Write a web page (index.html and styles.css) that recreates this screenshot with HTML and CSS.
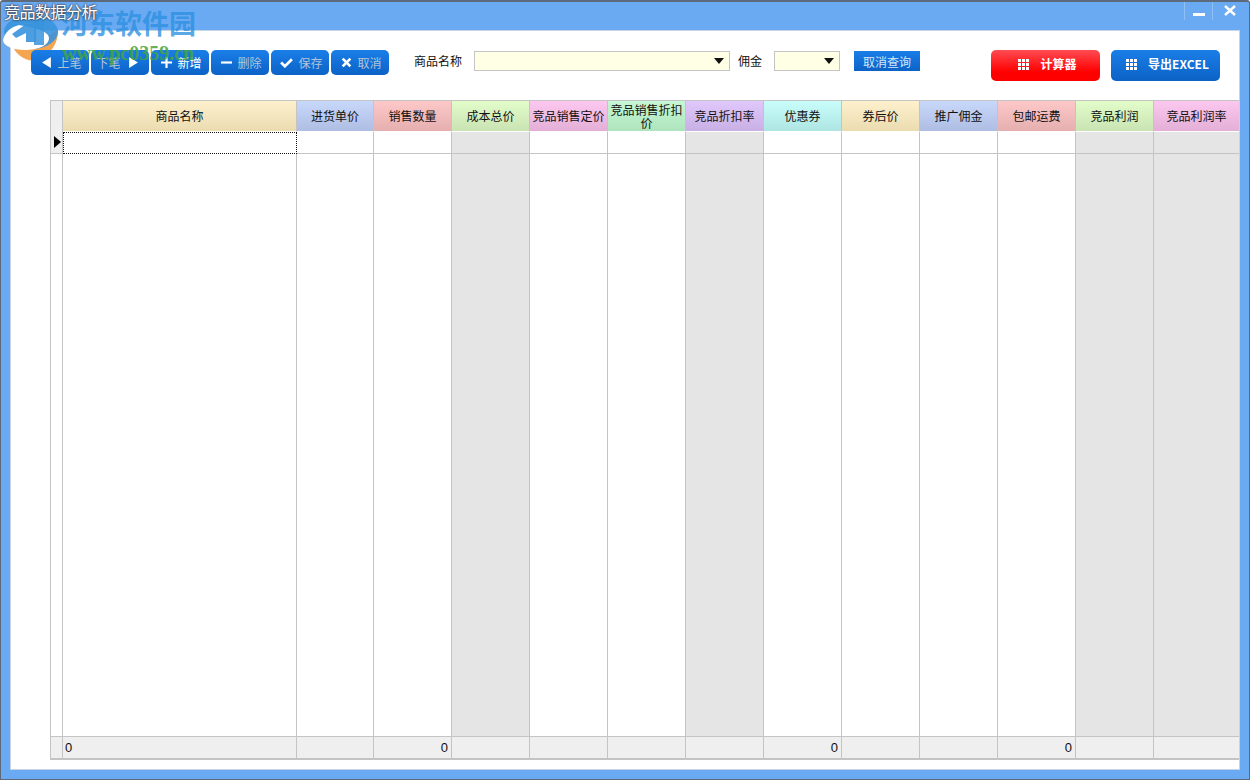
FILE: index.html
```html
<!DOCTYPE html>
<html>

<head>
  <meta charset="utf-8">
  <title>竞品数据分析</title>
  <link rel="stylesheet" href="styles.css">
</head>

<body>
  <div class="window">
    <header class="titlebar">
      <span class="title">竞品数据分析</span>
      <div class="winbtns">
        <span class="winbtn"><svg width="14" height="14" viewBox="0 0 14 14"><rect x="1" y="9" width="12" height="3" fill="#fff"/></svg></span>
        <span class="winbtn close"><svg width="14" height="14" viewBox="0 0 14 14"><path d="M2 2l10 9M12 2L2 11" stroke="#fff" stroke-width="2.4" fill="none"/></svg></span>
      </div>
    </header>

    <main class="client">
      <section class="toolbar">
        <div class="navbtns">
          <button class="navbtn"><svg class="ico" viewBox="0 0 10 10"><path d="M9 0v10L1 5z"/></svg><span class="dim">上笔</span></button>
          <button class="navbtn ico-right"><span class="dim">下笔</span><svg class="ico" viewBox="0 0 10 10"><path d="M1 0v10l8-5z"/></svg></button>
          <button class="navbtn"><svg class="ico" viewBox="0 0 10 10"><path d="M4 0h2v4h4v2H6v4H4V6H0V4h4z"/></svg><span>新增</span></button>
          <button class="navbtn"><svg class="ico" viewBox="0 0 10 10"><path d="M0 4h10v2H0z"/></svg><span class="dim">删除</span></button>
          <button class="navbtn"><svg class="ico wide" viewBox="0 0 12 10"><path d="M1 5l3.500 3.500L11 2" stroke="#fff" stroke-width="2.4" fill="none"/></svg><span class="dim">保存</span></button>
          <button class="navbtn"><svg class="ico" viewBox="0 0 10 10"><path d="M1.500 1.500l7 7M8.500 1.500l-7 7" stroke="#fff" stroke-width="2.4" fill="none"/></svg><span class="dim">取消</span></button>
        </div>

        <label class="lbl name-lbl">商品名称</label>
        <div class="combo combo-name"><i class="arrow"></i></div>
        <label class="lbl fee-lbl">佣金</label>
        <div class="combo combo-fee"><i class="arrow"></i></div>
        <button class="clear-btn">取消查询</button>

        <button class="bigbtn red">
          <svg class="grid-ico" viewBox="0 0 11 11"><path d="M0 0h3v3H0zM4 0h3v3H4zM8 0h3v3H8zM0 4h3v3H0zM4 4h3v3H4zM8 4h3v3H8zM0 8h3v3H0zM4 8h3v3H4zM8 8h3v3H8z"/></svg>
          <span>计算器</span>
        </button>
        <button class="bigbtn blue">
          <svg class="grid-ico" viewBox="0 0 11 11"><path d="M0 0h3v3H0zM4 0h3v3H4zM8 0h3v3H8zM0 4h3v3H0zM4 4h3v3H4zM8 4h3v3H8zM0 8h3v3H0zM4 8h3v3H4zM8 8h3v3H8z"/></svg>
          <span>导出EXCEL</span>
        </button>
      </section>

      <section class="table">
        <div class="th corner"></div>
        <div class="th c-tan">商品名称</div>
        <div class="th c-blue">进货单价</div>
        <div class="th c-red">销售数量</div>
        <div class="th c-green">成本总价</div>
        <div class="th c-pink">竞品销售定价</div>
        <div class="th c-mint two">竞品销售折扣价</div>
        <div class="th c-violet">竞品折扣率</div>
        <div class="th c-cyan">优惠券</div>
        <div class="th c-tan">券后价</div>
        <div class="th c-blue">推广佣金</div>
        <div class="th c-red">包邮运费</div>
        <div class="th c-green">竞品利润</div>
        <div class="th c-pink last">竞品利润率</div>

        <div class="rowhead"><i class="cursor"></i></div>
        <div class="td focus"></div>
        <div class="td"></div>
        <div class="td"></div>
        <div class="td ro"></div>
        <div class="td"></div>
        <div class="td"></div>
        <div class="td ro"></div>
        <div class="td"></div>
        <div class="td"></div>
        <div class="td"></div>
        <div class="td"></div>
        <div class="td ro"></div>
        <div class="td ro last"></div>

        <div class="rowhead blank"></div>
        <div class="fill"></div>
        <div class="fill"></div>
        <div class="fill"></div>
        <div class="fill ro"></div>
        <div class="fill"></div>
        <div class="fill"></div>
        <div class="fill ro"></div>
        <div class="fill"></div>
        <div class="fill"></div>
        <div class="fill"></div>
        <div class="fill"></div>
        <div class="fill ro"></div>
        <div class="fill ro last"></div>

        <div class="sum head"></div>
        <div class="sum left">0</div>
        <div class="sum"></div>
        <div class="sum">0</div>
        <div class="sum"></div>
        <div class="sum"></div>
        <div class="sum"></div>
        <div class="sum"></div>
        <div class="sum">0</div>
        <div class="sum"></div>
        <div class="sum"></div>
        <div class="sum">0</div>
        <div class="sum"></div>
        <div class="sum last"></div>
      </section>
    </main>

    <svg class="wm-logo" width="60" height="64" viewBox="0 0 60 64">
      <path d="M11 44C15 58 32 66 44 56C52 50 57 42 57 30L40 40z" fill="#f3a552"/>
      <ellipse cx="30" cy="32" rx="27" ry="17" fill="#3a94dd" opacity="0.9"/>
      <path d="M2 40C4 32 10 27 18 25C28 27 48 30 48 38C48 46 36 50 24 50C12 50 2 46 2 40z" fill="#fff"/>
      <path d="M11 34L25 24H35V42H25V33L15 38z" fill="#3a94dd" opacity="0.9"/>
      <path d="M33 17H43V45H33z" fill="#3a94dd" opacity="0.85"/>
    </svg>
    <div class="wm-name">河东软件园</div>
    <div class="wm-url">www.pc0359.cn</div>
  </div>
</body>

</html>
```

FILE: styles.css
```css
* {
  box-sizing: border-box;
}

html, body {
  margin: 0;
  padding: 0;
  height: 100%;
  overflow: hidden;
}

body {
  font-family: "Noto Sans CJK SC", "Liberation Sans", sans-serif;
  font-size: 12px;
  background: white;
}

.window {
  position: relative;
  width: 1250px;
  height: 780px;
  display: flex;
  flex-direction: column;
  background: #6aaaf3;
  border: 1px solid #5c6a7c;
  border-top-width: 2px;
  border-radius: 3px 3px 0 0;
  padding: 0 9px 9px 9px;
}

.titlebar {
  height: 28px;
  display: flex;
  justify-content: space-between;
  flex-shrink: 0;
}

.title {
  position: relative;
  z-index: 4;
  font-size: 16px;
  line-height: 18px;
  letter-spacing: -0.5px;
  margin-left: -6px;
  color: white;
  text-shadow: 0 0 2px #333, 0 0 2px #333;
}

.winbtns {
  display: flex;
}

.winbtn {
  width: 28px;
  height: 18px;
  display: flex;
  align-items: center;
  justify-content: center;
  border-left: 1px solid #8fc0f6;
}

.winbtn.close {
  padding-left: 7px;
}

.client {
  flex: 1;
  display: flex;
  flex-direction: column;
  background: white;
  border: 1px solid #c6d4e4;
  padding: 19px 0 9px 39px;
  min-height: 0;
}

/* toolbar */
.toolbar {
  display: flex;
  align-items: flex-start;
  height: 50px;
  flex-shrink: 0;
}

.navbtns {
  position: relative;
  z-index: 2;
  display: flex;
  gap: 2px;
  width: 359px;
  margin-left: -19px;
}

button {
  font-family: inherit;
  border: 0;
  padding: 0;
  color: white;
}

.navbtn {
  width: 58px;
  height: 25px;
  display: flex;
  align-items: center;
  justify-content: center;
  gap: 5px;
  padding-left: 3px;
  font-size: 12px;
  border-radius: 5px;
  background: linear-gradient(#1a7ee8, #0c62c6);
}

.navbtn.ico-right {
  padding-left: 0;
  padding-right: 5px;
  gap: 7px;
}

.dim {
  color: #b3c4d8;
}

.ico {
  width: 11px;
  height: 11px;
  fill: white;
}

.ico.wide {
  width: 13px;
}

.lbl {
  line-height: 20px;
  margin-top: 1px;
  color: #111;
}

.name-lbl {
  margin-left: 24px;
  width: 60px;
}

.combo {
  position: relative;
  height: 20px;
  margin-top: 1px;
  background: #ffffe6;
  border: 1px solid #c4c4c4;
}

.combo-name {
  width: 256px;
}

.fee-lbl {
  margin-left: 8px;
  width: 36px;
}

.combo-fee {
  width: 66px;
}

.arrow {
  position: absolute;
  right: 5px;
  top: 6px;
  border-left: 5px solid transparent;
  border-right: 5px solid transparent;
  border-top: 6px solid #111;
}

.clear-btn {
  width: 66px;
  height: 20px;
  margin: 1px 0 0 14px;
  font-size: 12px;
  background: linear-gradient(#1a7ee8, #0c62c6);
  color: #d5e6f8;
}

.bigbtn {
  height: 31px;
  width: 109px;
  display: flex;
  align-items: center;
  justify-content: center;
  gap: 11px;
  padding-left: 4px;
  border-radius: 5px;
  font-size: 12px;
  font-weight: bold;
}

.bigbtn span {
  margin-top: -5px;
}

.bigbtn.red {
  margin-left: 71px;
  background: linear-gradient(#ff4c52, #ff0000 70%);
}

.bigbtn.blue {
  margin-left: 11px;
  background: linear-gradient(#1a7ee8, #0c62c6);
}

.grid-ico {
  width: 11px;
  height: 11px;
  margin-top: -3px;
  fill: white;
}

/* table */
.table {
  flex: 1;
  min-height: 0;
  display: grid;
  grid-template-columns: 12px 234px 77px repeat(10, 78px) 85px;
  grid-template-rows: 31px 22px 1fr 22px;
  border-top: 1px solid #c4c4c4;
  border-left: 1px solid #c4c4c4;
  border-bottom: 2px solid #c4c4c4;
}

.th {
  display: flex;
  align-items: center;
  justify-content: center;
  text-align: center;
  color: #111;
  font-size: 12px;
  line-height: 13px;
  padding-bottom: 2px;
  border-bottom: 1px solid white;
  border-right: 1px solid #c4c4c4;
}

.th.two {
  padding: 0 1px 1px;
}

.th.last, .td.last, .fill.last, .sum.last {
  border-right: 0;
}

.corner {
  background: #efefef;
  border-bottom: 0;
}

.c-tan { background: linear-gradient(#fdf0cc, #ebdcb0); }
.c-blue { background: linear-gradient(#c8d8fb, #aebde2); }
.c-red { background: linear-gradient(#fdc8c8, #e6afaf); }
.c-green { background: linear-gradient(#e2fcca, #c9e4b2); }
.c-pink { background: linear-gradient(#fcc8f0, #e4afd6); }
.c-mint { background: linear-gradient(#c6f7d6, #aee4bc); }
.c-violet { background: linear-gradient(#e0c8fc, #c8afe4); }
.c-cyan { background: linear-gradient(#c8fdfa, #aee5e2); }

.rowhead {
  position: relative;
  background: #efefef;
  border-right: 1px solid #c4c4c4;
  border-bottom: 1px solid #c4c4c4;
}

.rowhead.blank {
  background: white;
  border: 0;
  border-right: 1px solid #c4c4c4;
}

.cursor {
  position: absolute;
  left: 3px;
  top: 4px;
  border-top: 6px solid transparent;
  border-bottom: 6px solid transparent;
  border-left: 7px solid black;
}

.td {
  background: white;
  border-right: 1px solid #c4c4c4;
  border-bottom: 1px solid #c4c4c4;
}

.focus {
  border: 1px dotted #111;
}

.fill {
  background: white;
  border-right: 1px solid #c4c4c4;
}

.ro {
  background: #e5e5e5;
}

.sum {
  background: #efefef;
  border-top: 1px solid #c4c4c4;
  border-right: 1px solid #c4c4c4;
  font-family: "Liberation Sans", sans-serif;
  font-size: 13px;
  line-height: 21px;
  text-align: right;
  padding: 0 3px 0 2px;
  color: #111;
}

.sum.left {
  text-align: left;
}

/* watermark over the title bar */
.wm-logo {
  position: absolute;
  left: 0;
  top: -2px;
  z-index: 1;
}

.wm-name {
  position: absolute;
  z-index: 3;
  left: 60px;
  top: 3px;
  font-size: 27px;
  line-height: 36px;
  font-weight: bold;
  color: rgba(45, 145, 225, 0.8);
  white-space: nowrap;
  pointer-events: none;
}

.wm-url {
  position: absolute;
  z-index: 3;
  left: 61px;
  top: 41px;
  font-family: "Liberation Serif", serif;
  font-size: 20px;
  line-height: 20px;
  font-weight: bold;
  color: rgba(70, 165, 60, 0.85);
  white-space: nowrap;
  pointer-events: none;
}
```
